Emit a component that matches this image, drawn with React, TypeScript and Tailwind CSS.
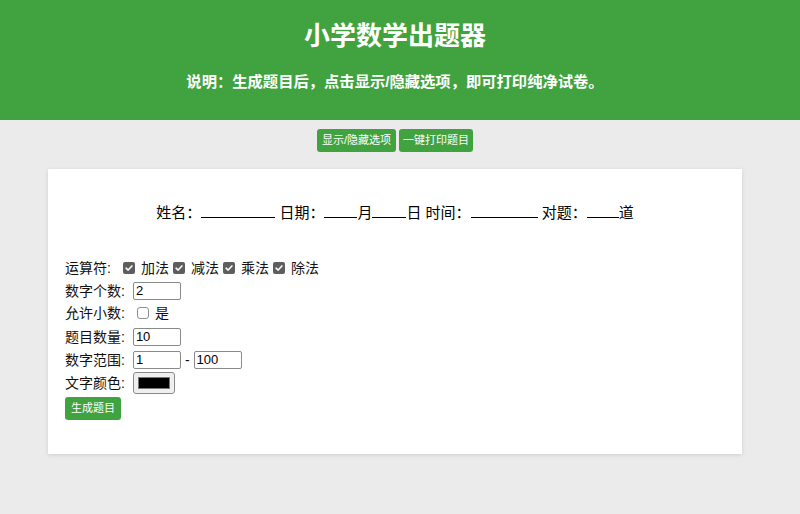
import React from "react";

function Check({ checked }: { checked: boolean }) {
  return checked ? (
    <span className="ml-[4px] mr-[3px] inline-flex h-[12px] w-[12px] items-center justify-center rounded-[2px] bg-[#5e5e5e]">
      <svg viewBox="0 0 12 12" className="h-[10px] w-[10px]" aria-hidden="true">
        <polyline points="2.5 6.2 5 8.5 9.5 3.5" fill="none" stroke="#fff" strokeWidth={1.8} strokeLinecap="round" strokeLinejoin="round" />
      </svg>
    </span>
  ) : (
    <span className="ml-[4px] mr-[3px] inline-block h-[12px] w-[12px] rounded-[3px] border border-[#8f8f8f] bg-white" />
  );
}

function Field({ value }: { value: string }) {
  return (
    <span className="inline-flex h-[18px] w-[48px] items-center rounded-[2px] border border-[#8a8a8a] bg-white px-[2px] text-[13px] text-black">
      {value}
    </span>
  );
}

function Blank({ w }: { w: string }) {
  return <span className={`inline-block ${w} h-[15px] border-b border-black align-baseline`} />;
}

const ops = ["加法", "减法", "乘法", "除法"];

export default function App() {
  return (
    <div className="min-h-[514px] bg-[#ebebeb] font-['Liberation_Sans','Noto_Sans_CJK_SC',sans-serif] text-black">
      <header className="h-[120px] w-full bg-[#41a33f] pt-[18px] text-white">
        <div className="w-[790px] text-center">
          <h1 className="text-[26px] font-bold leading-[36px]">小学数学出题器</h1>
          <p className="mt-[16px] text-[15.3px] font-bold leading-[24px]">
            说明：生成题目后，点击显示/隐藏选项，即可打印纯净试卷。
          </p>
        </div>
      </header>

      <div className="w-[790px]">
        <div className="flex justify-center gap-[3px] pt-[9px]">
          <button className="h-[23px] rounded-[3px] bg-[#41a33f] px-[5px] text-[11px] text-white">
            显示/隐藏选项
          </button>
          <button className="h-[23px] rounded-[3px] bg-[#41a33f] px-[4px] text-[11px] text-white">
            一键打印题目
          </button>
        </div>

        <main className="mx-[48px] mt-[17px] bg-white px-[17px] pb-[34px] pt-[32px] shadow-[0_1px_4px_rgba(0,0,0,0.12)]">
          <div className="text-center text-[15px] leading-[24px]">
            姓名：<Blank w="w-[74px]" /> 日期：<Blank w="w-[33px]" />月<Blank w="w-[34px]" />日 时间：
            <Blank w="w-[67px]" /> 对题：<Blank w="w-[32px]" />道
          </div>

          <div className="mt-[32px] flex flex-col text-[14px] text-[#111]">
            <div className="flex h-[22px] items-center">
              <span className="mr-[8px]">运算符:</span>
              {ops.map((op) => (
                <span key={op} className="inline-flex items-center">
                  <Check checked />
                  <span className="ml-[3px]">{op}</span>
                </span>
              ))}
            </div>
            <div className="flex h-[24px] items-center">
              <span className="mr-[8px]">数字个数:</span>
              <Field value="2" />
            </div>
            <div className="flex h-[20px] items-center">
              <span className="mr-[8px]">允许小数:</span>
              <Check checked={false} />
              <span className="ml-[3px]">是</span>
            </div>
            <div className="mt-[2px] flex h-[24px] items-center">
              <span className="mr-[8px]">题目数量:</span>
              <Field value="10" />
            </div>
            <div className="flex h-[22px] items-center">
              <span className="mr-[8px]">数字范围:</span>
              <Field value="1" />
              <span className="mx-[4px]">-</span>
              <Field value="100" />
            </div>
            <div className="flex h-[24px] items-center">
              <span className="mr-[8px]">文字颜色:</span>
              <span className="flex h-[22px] w-[42px] items-center justify-center rounded-[3px] border border-[#8a8a8a] bg-[#efefef]">
                <span className="h-[12px] w-[32px] border border-[#777] bg-black" />
              </span>
            </div>
            <div className="mt-[2px]">
              <button className="h-[23px] rounded-[3px] bg-[#41a33f] px-[6px] text-[11px] text-white">
                生成题目
              </button>
            </div>
          </div>
        </main>
      </div>
    </div>
  );
}
